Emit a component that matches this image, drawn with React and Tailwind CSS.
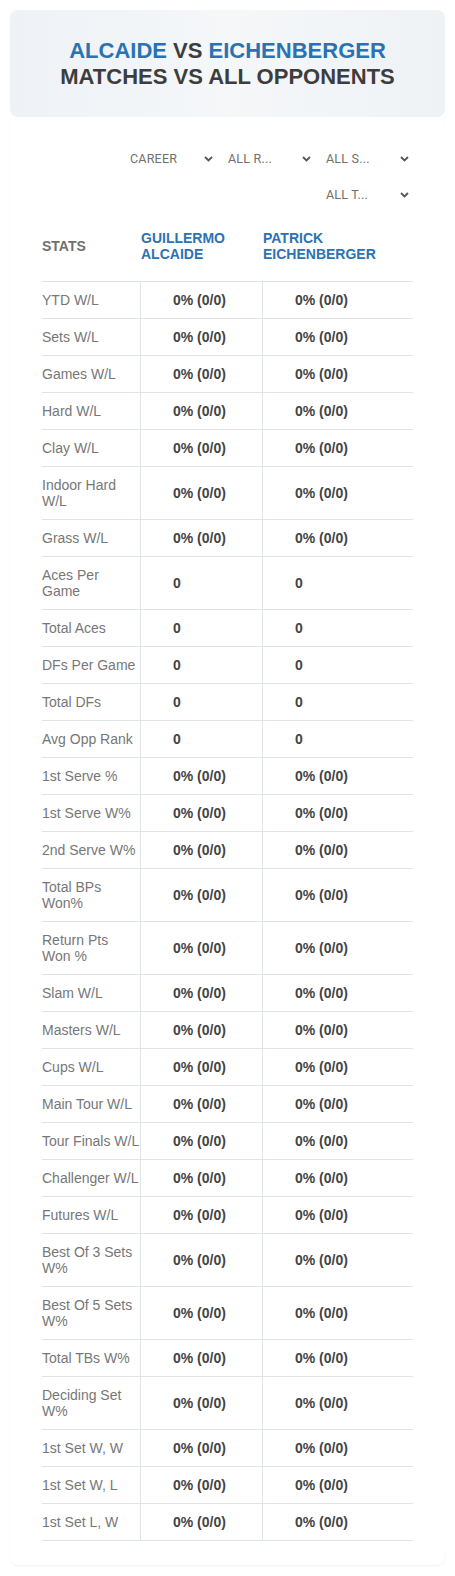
import React from "react";

const rows = [
  ["YTD W/L", "0% (0/0)"],
  ["Sets W/L", "0% (0/0)"],
  ["Games W/L", "0% (0/0)"],
  ["Hard W/L", "0% (0/0)"],
  ["Clay W/L", "0% (0/0)"],
  ["Indoor Hard W/L", "0% (0/0)"],
  ["Grass W/L", "0% (0/0)"],
  ["Aces Per Game", "0"],
  ["Total Aces", "0"],
  ["DFs Per Game", "0"],
  ["Total DFs", "0"],
  ["Avg Opp Rank", "0"],
  ["1st Serve %", "0% (0/0)"],
  ["1st Serve W%", "0% (0/0)"],
  ["2nd Serve W%", "0% (0/0)"],
  ["Total BPs Won%", "0% (0/0)"],
  ["Return Pts Won %", "0% (0/0)"],
  ["Slam W/L", "0% (0/0)"],
  ["Masters W/L", "0% (0/0)"],
  ["Cups W/L", "0% (0/0)"],
  ["Main Tour W/L", "0% (0/0)"],
  ["Tour Finals W/L", "0% (0/0)"],
  ["Challenger W/L", "0% (0/0)"],
  ["Futures W/L", "0% (0/0)"],
  ["Best Of 3 Sets W%", "0% (0/0)"],
  ["Best Of 5 Sets W%", "0% (0/0)"],
  ["Total TBs W%", "0% (0/0)"],
  ["Deciding Set W%", "0% (0/0)"],
  ["1st Set W, W", "0% (0/0)"],
  ["1st Set W, L", "0% (0/0)"],
  ["1st Set L, W", "0% (0/0)"],
];

// little select-looking box
const Filter = ({ label }) => (
  <div className="w-[92px] h-[32px] flex items-center justify-between pl-[5px] pr-[4px] text-[12.5px] text-[#707070] font-['Roboto',sans-serif]">
    <span className="tracking-[0.2px]">{label}</span>
    <svg width="9" height="6" viewBox="0 0 9 6" fill="none">
      <path d="M1 1l3.5 3.5L8 1" stroke="#555" strokeWidth="1.8" />
    </svg>
  </div>
);

export default function App() {
  return (
    <div className="px-[10px] pt-[10px] pb-[10px] bg-white font-['Liberation_Sans',Arial,sans-serif]">
      <div className="h-[107px] rounded-lg bg-linear-to-r from-[#eef2f6] via-[#f5f7f9] to-[#eff2f5] flex flex-col items-center justify-center text-[22px] leading-[26px] font-bold text-[#3d3d3d]">
        <div>
          <span className="text-[#2b72b4]">ALCAIDE</span> VS{" "}
          <span className="text-[#2b72b4]">EICHENBERGER</span>
        </div>
        <div>MATCHES VS ALL OPPONENTS</div>
      </div>

      <div className="rounded-lg shadow-[0_1px_2px_rgba(0,0,0,0.06)] px-[32px] pt-[26px] pb-[24px]">
        <div className="flex flex-wrap justify-end gap-x-[6px] gap-y-[4px] pl-[80px]">
          <Filter label="CAREER" />
          <Filter label="ALL R..." />
          <Filter label="ALL S..." />
          <Filter label="ALL T..." />
        </div>

        <div className="grid grid-cols-[98px_122px_151px] text-[14px] leading-[16px]">
          {/* header */}
          <div className="h-[71px] flex items-center font-bold text-[#707070] border-b border-[#dfe4e7]">
            STATS
          </div>
          <div className="h-[71px] flex items-center pl-[1px] font-bold text-[#2b72b4] border-b border-[#dfe4e7]">
            GUILLERMO
            <br />
            ALCAIDE
          </div>
          <div className="h-[71px] flex items-center pl-[1px] font-bold text-[#2b72b4] border-b border-[#dfe4e7]">
            PATRICK
            <br />
            EICHENBERGER
          </div>

          {rows.map(([label, val]) => (
            <React.Fragment key={label}>
              <div className="py-[10px] text-[#777] border-b border-[#dfe4e7]">{label}</div>
              <div className="flex items-center pl-[32px] font-bold text-[#444] border-b border-l border-[#dfe4e7]">
                {val}
              </div>
              <div className="flex items-center pl-[32px] font-bold text-[#444] border-b border-l border-[#dfe4e7]">
                {val}
              </div>
            </React.Fragment>
          ))}
        </div>
      </div>
    </div>
  );
}
